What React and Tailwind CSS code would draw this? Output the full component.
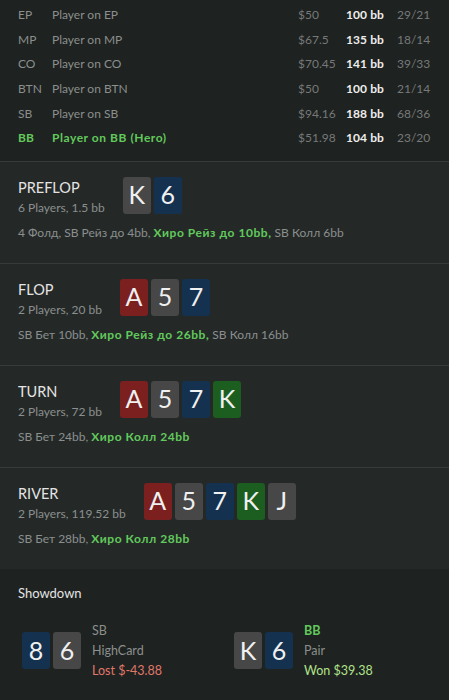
import React from 'react';

const players = [
  { pos: 'EP', name: 'Player on EP', cash: '$50', bb: '100 bb', stat: '29/21' },
  { pos: 'MP', name: 'Player on MP', cash: '$67.5', bb: '135 bb', stat: '18/14' },
  { pos: 'CO', name: 'Player on CO', cash: '$70.45', bb: '141 bb', stat: '39/33' },
  { pos: 'BTN', name: 'Player on BTN', cash: '$50', bb: '100 bb', stat: '21/14' },
  { pos: 'SB', name: 'Player on SB', cash: '$94.16', bb: '188 bb', stat: '68/36' },
  { pos: 'BB', name: 'Player on BB (Hero)', cash: '$51.98', bb: '104 bb', stat: '23/20', hero: true },
];

const suitBg = {
  r: 'bg-[#7b1f1f]',
  g: 'bg-[#474747]',
  b: 'bg-[#14324f]',
  c: 'bg-[#1b5e1f]',
};

const Card = ({ rank, suit }) => (
  <div className={`flex items-center justify-center w-[28px] h-[37px] rounded-[3px] text-[25px] text-[#f0f0f0] ${suitBg[suit]}`}>
    {rank}
  </div>
);

const streets = [
  {
    title: 'PREFLOP',
    sub: '6 Players, 1.5 bb',
    cards: [['K', 'g'], ['6', 'b']],
    pre: '4 Фолд, SB Рейз до 4bb, ',
    hero: 'Хиро Рейз до 10bb,',
    post: ' SB Колл 6bb',
  },
  {
    title: 'FLOP',
    sub: '2 Players, 20 bb',
    cards: [['A', 'r'], ['5', 'g'], ['7', 'b']],
    pre: 'SB Бет 10bb, ',
    hero: 'Хиро Рейз до 26bb,',
    post: ' SB Колл 16bb',
  },
  {
    title: 'TURN',
    sub: '2 Players, 72 bb',
    cards: [['A', 'r'], ['5', 'g'], ['7', 'b'], ['K', 'c']],
    pre: 'SB Бет 24bb, ',
    hero: 'Хиро Колл 24bb',
    post: '',
  },
  {
    title: 'RIVER',
    sub: '2 Players, 119.52 bb',
    cards: [['A', 'r'], ['5', 'g'], ['7', 'b'], ['K', 'c'], ['J', 'g']],
    pre: 'SB Бет 28bb, ',
    hero: 'Хиро Колл 28bb',
    post: '',
  },
];

const Street = ({ s }) => (
  <div className="border-t border-[#373c3b] bg-[#242928] px-[18px] pt-[15px] pb-[21px]">
    <div className="flex items-start gap-[18px]">
      <div>
        <div className="text-[14.5px] leading-[21px] text-[#e4e4e4]">{s.title}</div>
        <div className="text-[12px] leading-[20px] text-[#8b8f8e]">{s.sub}</div>
      </div>
      <div className="flex gap-[3px]">
        {s.cards.map(([r, su], i) => (
          <Card key={i} rank={r} suit={su} />
        ))}
      </div>
    </div>
    <div className="mt-[6px] text-[12px] leading-[18px] text-[#8b8f8e]">
      {s.pre}
      <span className="font-bold tracking-[0.55px] text-[#62c95c]">{s.hero}</span>
      {s.post}
    </div>
  </div>
);

const Hand = ({ cards, pos, posClass, combo, result, resultClass }) => (
  <div className="flex items-center gap-[11px]">
    <div className="flex gap-[3px]">
      {cards.map(([r, su], i) => (
        <Card key={i} rank={r} suit={su} />
      ))}
    </div>
    <div className="text-[12.5px] leading-[20px]">
      <div className={posClass}>{pos}</div>
      <div className="text-[#8b8f8e]">{combo}</div>
      <div className={resultClass}>{result}</div>
    </div>
  </div>
);

export default function App() {
  return (
    <div className="w-[449px] h-[700px] overflow-hidden bg-[#1e2220] font-['Lato',sans-serif]">
      {/* Players table */}
      <div className="px-[18px] pt-[3px] pb-[10px]">
        {players.map((p) => (
          <div key={p.pos} className="flex items-center h-[24.6px] text-[12px]">
            <div className={`w-[34px] ${p.hero ? 'font-bold text-[#62c95c]' : 'text-[#8b8f8e]'}`}>{p.pos}</div>
            <div className={`flex-1 ${p.hero ? 'font-bold tracking-[0.55px] text-[#62c95c]' : 'text-[#8b8f8e]'}`}>{p.name}</div>
            <div className="w-[48px] text-[#76797a]">{p.cash}</div>
            <div className="w-[51px] font-bold tracking-[0.1px] text-[#ededed]">{p.bb}</div>
            <div className="w-[34px] text-[#76797a]">{p.stat}</div>
          </div>
        ))}
      </div>

      {streets.map((s) => (
        <Street key={s.title} s={s} />
      ))}

      {/* Showdown */}
      <div className="bg-[#1e2220] px-[18px] pt-[15px]">
        <div className="text-[13px] leading-[18px] text-[#e4e4e4]">Showdown</div>
        <div className="mt-[19px] flex pl-[4px]">
          <div className="w-[212px]">
            <Hand
              cards={[['8', 'b'], ['6', 'g']]}
              pos="SB"
              posClass="text-[#8b8f8e]"
              combo="HighCard"
              result="Lost $-43.88"
              resultClass="text-[#e0786a]"
            />
          </div>
          <Hand
            cards={[['K', 'g'], ['6', 'b']]}
            pos="BB"
            posClass="font-bold text-[#62c95c]"
            combo="Pair"
            result="Won $39.38"
            resultClass="text-[#b1e38a]"
          />
        </div>
      </div>
    </div>
  );
}
